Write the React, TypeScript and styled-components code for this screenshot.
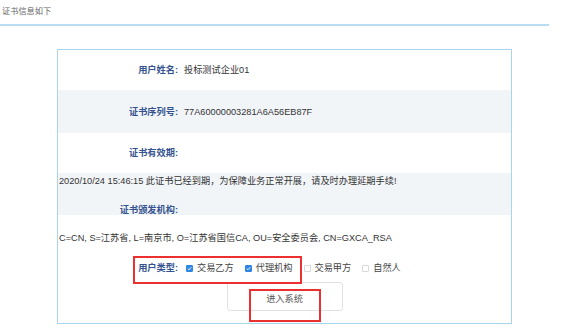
import React from 'react';
import styled, { createGlobalStyle } from 'styled-components';

const GlobalStyle = createGlobalStyle`
  html, body {
    margin: 0;
    padding: 0;
    background: #ffffff;
  }
  body {
    font-family: "Liberation Sans", "Noto Sans CJK SC", sans-serif;
    font-size: 9.2px;
    color: #333;
  }
`;

const Page = styled.div`
  position: relative;
  width: 576px;
  height: 336px;
  overflow: hidden;
`;

const Header = styled.div`
  width: 549px;
  height: 26px;
  padding-left: 2px;
  box-sizing: border-box;
  border-bottom: 2px solid #b9dcf0;
  font-size: 8.2px;
  line-height: 24px;
  color: #666;
`;

const Panel = styled.div`
  margin: 23px 0 0 57px;
  width: 455px;
  height: 275px;
  box-sizing: border-box;
  border: 1.5px solid #a9d4ee;
  display: flex;
  flex-direction: column;
`;

const Row = styled.div<{ $shade?: boolean; $h: number }>`
  height: ${(p) => p.$h}px;
  flex-shrink: 0;
  display: flex;
  align-items: center;
  background: ${(p) => (p.$shade ? '#f2f5f8' : 'transparent')};
`;

const StackRow = styled.div<{ $shade?: boolean; $h: number }>`
  height: ${(p) => p.$h}px;
  flex-shrink: 0;
  display: flex;
  flex-direction: column;
  background: ${(p) => (p.$shade ? '#f2f5f8' : 'transparent')};
`;

const Label = styled.span`
  width: 120px;
  flex-shrink: 0;
  text-align: right;
  color: #34528f;
  font-weight: bold;
  line-height: 14px;
`;

const Value = styled.span`
  margin-left: 6px;
  line-height: 14px;
  color: #333;
`;

const LabelLine = styled.div<{ $top: number }>`
  display: flex;
  margin-top: ${(p) => p.$top}px;
`;

const FullText = styled.div<{ $top: number }>`
  margin-top: ${(p) => p.$top}px;
  padding-left: 1px;
  line-height: 14px;
  white-space: nowrap;
`;

const TypeList = styled.div`
  display: flex;
  align-items: center;
  margin-left: 8px;
`;

const TypeItem = styled.label`
  display: flex;
  align-items: center;
  margin-right: 11px;
  line-height: 14px;
  color: #444;
`;

const Box = styled.span<{ $checked?: boolean }>`
  width: 7px;
  height: 7px;
  box-sizing: border-box;
  margin-right: 4px;
  border-radius: 1px;
  display: flex;
  align-items: center;
  justify-content: center;
  background: ${(p) => (p.$checked ? '#2f86e0' : '#fff')};
  border: 1px solid ${(p) => (p.$checked ? '#2f86e0' : '#d8d8d8')};
`;

const ButtonRow = styled.div`
  display: flex;
  justify-content: center;
  margin-top: -1px;
`;

const EnterButton = styled.button`
  width: 116px;
  height: 29px;
  border: 1px solid #e2e2e2;
  border-radius: 3px;
  background: #fff;
  color: #555;
  font-family: "Liberation Sans", "Noto Sans CJK SC", sans-serif;
  font-size: 9.2px;
  padding: 3px 0 0;
  cursor: pointer;
`;

const Mark = styled.div<{ $x: number; $y: number; $w: number; $h: number }>`
  position: absolute;
  left: ${(p) => p.$x}px;
  top: ${(p) => p.$y}px;
  width: ${(p) => p.$w}px;
  height: ${(p) => p.$h}px;
  box-sizing: border-box;
  border: 2px solid #ec2f2f;
  pointer-events: none;
`;

const Check = () => (
  <svg width="5" height="5" viewBox="0 0 10 10">
    <path d="M1.5 5.2 L4 7.6 L8.6 2.4" fill="none" stroke="#fff" strokeWidth="1.8" />
  </svg>
);

const types = [
  { name: '交易乙方', checked: true },
  { name: '代理机构', checked: true },
  { name: '交易甲方', checked: false },
  { name: '自然人', checked: false },
];

export default function App() {
  return (
    <Page>
      <GlobalStyle />
      <Header>证书信息如下</Header>
      <Panel>
        <Row $h={40}>
          <Label>用户姓名:</Label>
          <Value>投标测试企业01</Value>
        </Row>
        <Row $h={43} $shade>
          <Label>证书序列号:</Label>
          <Value>77A60000003281A6A56EB87F</Value>
        </Row>
        <Row $h={40}>
          <Label>证书有效期:</Label>
        </Row>
        <StackRow $h={42} $shade>
          <FullText $top={1}>
            2020/10/24 15:46:15 此证书已经到期，为保障业务正常开展，请及时办理延期手续!
          </FullText>
          <LabelLine $top={15}>
            <Label>证书颁发机构:</Label>
          </LabelLine>
        </StackRow>
        <StackRow $h={38}>
          <FullText $top={16}>
            C=CN, S=江苏省, L=南京市, O=江苏省国信CA, OU=安全委员会, CN=GXCA_RSA
          </FullText>
        </StackRow>
        <Row $h={30}>
          <Label>用户类型:</Label>
          <TypeList>
            {types.map((t) => (
              <TypeItem key={t.name}>
                <Box $checked={t.checked}>{t.checked && <Check />}</Box>
                {t.name}
              </TypeItem>
            ))}
          </TypeList>
        </Row>
        <ButtonRow>
          <EnterButton>进入系统</EnterButton>
        </ButtonRow>
      </Panel>
      <Mark $x={133} $y={256} $w={169} $h={28} />
      <Mark $x={249} $y={289} $w={72} $h={33} />
    </Page>
  );
}
